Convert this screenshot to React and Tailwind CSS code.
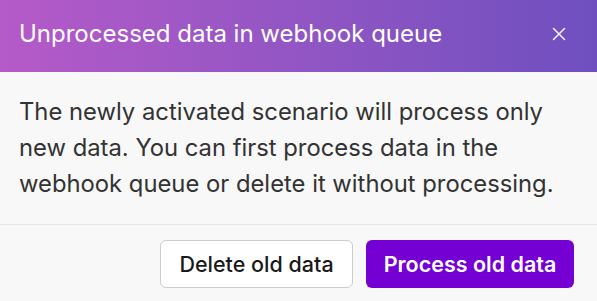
import React from "react";

const App = () => {
  return (
    <div className="w-[597px] h-[301px] bg-[#f8f8f8] font-['Inter',sans-serif] overflow-hidden">
      <div className="h-[72px] flex items-center justify-between pl-[19px] pr-[31px] pb-[5px] bg-gradient-to-r from-[#b55ac8] to-[#6f4fbf]">
        <h2 className="text-white text-[24px] leading-[36px] font-normal">Unprocessed data in webhook queue</h2>
        <button className="text-white/90 mt-[1px]">
          <svg width="14" height="14" viewBox="0 0 14 14" fill="none" stroke="currentColor" strokeWidth="1.6" strokeLinecap="round">
            <path d="M1.5 1.5l11 11M12.5 1.5l-11 11" />
          </svg>
        </button>
      </div>

      <div className="pl-[19px] pr-[18px] pt-[22px] h-[153px] border-b border-[#e6e6e6]">
        <p className="text-[#333333] text-[23.8px] leading-[36px]">
          The newly activated scenario will process only new data. You can first process data in the webhook queue or
          delete it without processing.
        </p>
      </div>

      <div className="flex justify-end gap-[13px] pr-[23px] pt-[15px]">
        <button className="h-[48px] w-[193px] rounded-[6px] border border-[#c9ccd1] bg-white text-[#1a1a1a] text-[21.5px] font-medium">
          Delete old data
        </button>
        <button className="h-[48px] w-[208px] rounded-[6px] bg-[#7400d4] text-white text-[21.5px] font-semibold">
          Process old data
        </button>
      </div>
    </div>
  );
};

export default App;
